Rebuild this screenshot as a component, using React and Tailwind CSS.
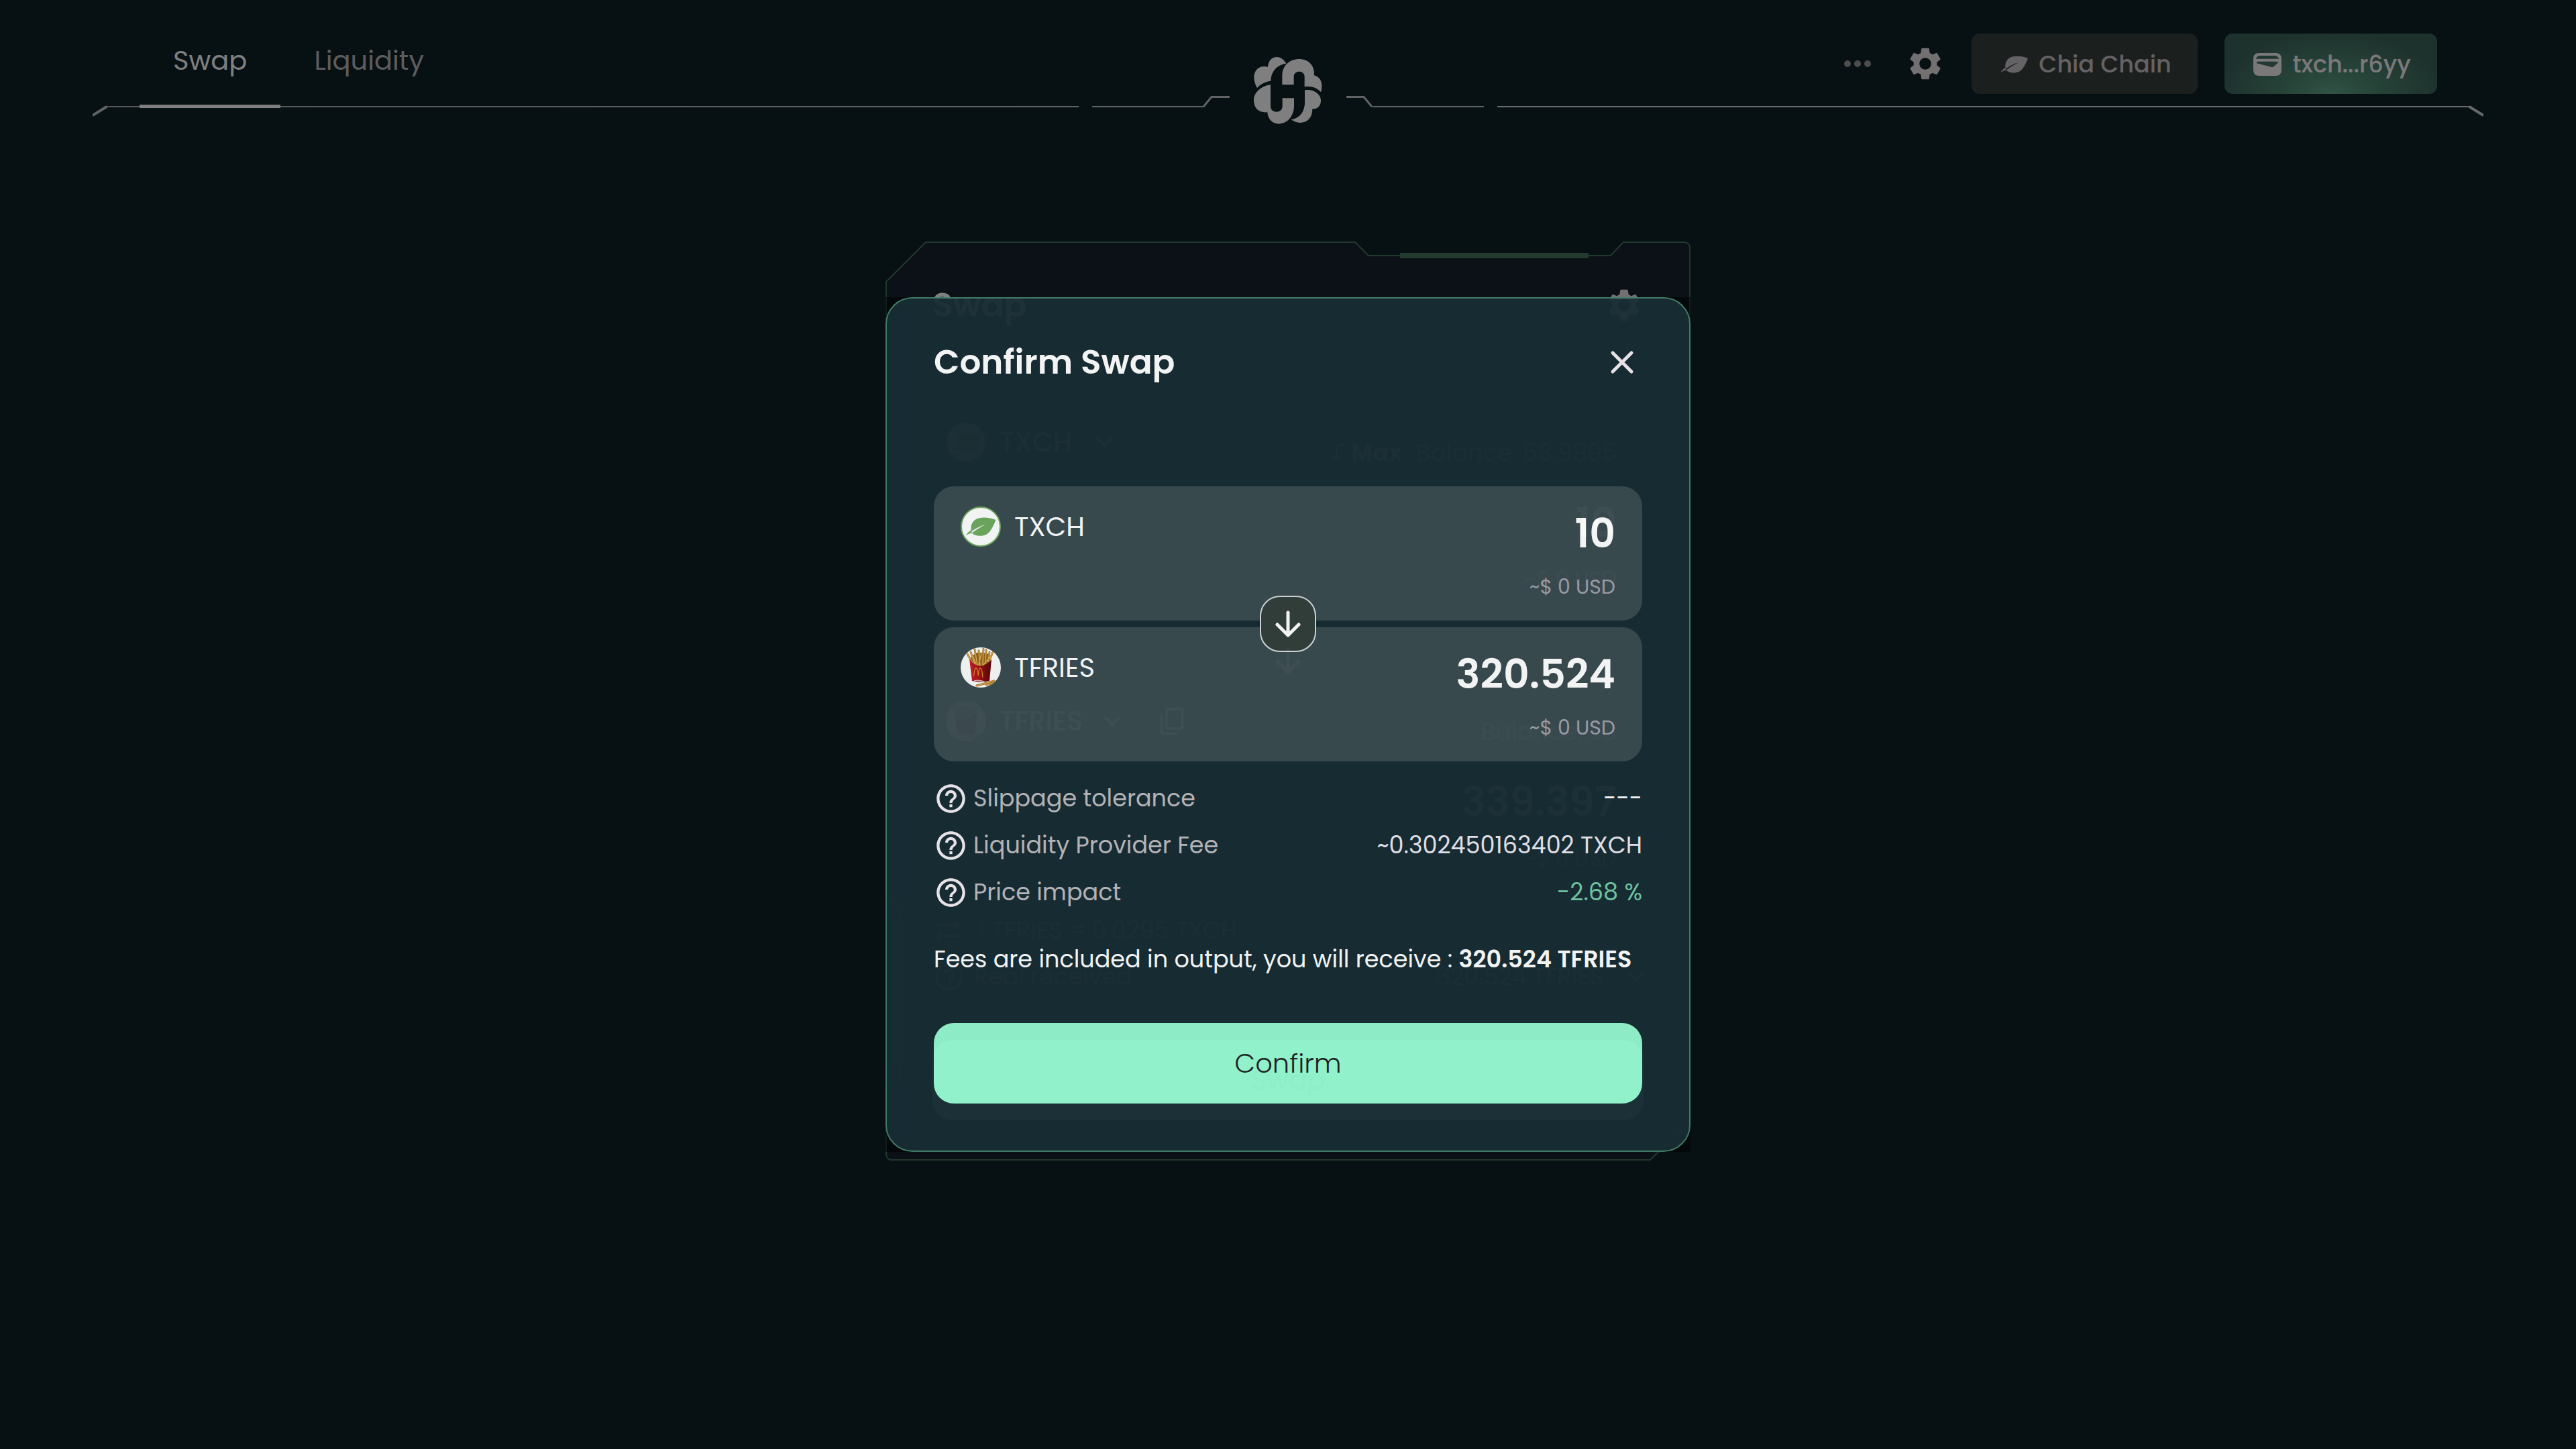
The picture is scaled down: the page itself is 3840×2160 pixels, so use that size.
import React from "react";
import { MdSettings, MdHelpOutline, MdContentCopy } from "react-icons/md";

function Logo() {
  return (
    <svg viewBox="0 0 360 360" className="h-[120px] w-[120px] fill-white" aria-label="Hashgreen">
      <path d="M172 59C160 38 144 30 130 30C108 30 92 46 90 74C58 65 30 82 28 118C28 138 34 156 42 168C56 152 78 140 103 137C104 100 125 66 172 59Z" />
      <path d="M102 154C60 160 28 188 27 222C27 260 50 280 88 277C90 310 112 329 140 329C178 327 206 295 207 250V214H155V250C155 284 102 284 102 250Z" />
      <path d="M154 154V110C156 65 190 39 230 39C272 39 300 68 297 112C320 118 334 138 331 168C330 178 329 182 327 187C312 168 285 158 254 163V118C254 88 206 88 206 118V154Z" />
      <path d="M255 178C290 172 325 192 327 222C328 248 312 264 289 262C290 300 268 324 234 324C218 323 205 318 194 310C232 304 252 276 255 240Z" />
    </svg>
  );
}

function Leaf({ className, vein }) {
  return (
    <svg viewBox="0 0 125 78" className={className} aria-hidden="true">
      <path
        fill="currentColor"
        d="M125 11C100 1 62 -3 42 9C26 19 20 36 23 53C14 59 6 67 0 76C10 70 18 66 27 66C38 79 68 81 88 70C104 60 115 37 125 11Z"
      />
      <path d="M22 61C38 48 58 38 82 30C62 42 46 50 28 64Z" fill={vein} />
    </svg>
  );
}

function Fries({ className }) {
  return (
    <svg viewBox="0 0 60 60" className={className} aria-hidden="true">
      <defs>
        <clipPath id="friesClip">
          <circle cx="30" cy="30" r="30" />
        </clipPath>
        <linearGradient id="friesBox" x1="0" x2="1" y1="0" y2="0">
          <stop offset="0" stopColor="#c81d24" />
          <stop offset="0.45" stopColor="#a81318" />
          <stop offset="0.7" stopColor="#7a0c10" />
          <stop offset="1" stopColor="#5e090c" />
        </linearGradient>
      </defs>
      <g clipPath="url(#friesClip)">
        <rect width="60" height="60" fill="#fbfbfb" />
        <path d="M14 17L18 12L24 8L34 8L42 10L45 18Q36 30 28 28Q20 26 14 17Z" fill="#9a661c" />
        <g stroke="#9c681e" strokeWidth="2.800" strokeLinecap="round">
          <path d="M17 22L10 10M21 24L15 7M25 27L21 3M29 27L27 5M33 27L34 2M37 24L38 4M41 21L43 7M44 17L48 7M27 26L31 9M23 25L18 13M34 26L46 12" />
        </g>
        <g stroke="#dcae54" strokeWidth="1.500" strokeLinecap="round">
          <path d="M17 22L10 10M21 24L15 7M25 27L21 3M29 27L27 5M33 27L34 2M37 24L38 4M41 21L43 7M44 17L48 7M27 26L31 9M23 25L18 13M34 26L46 12" />
        </g>
        <path d="M13 17Q28 38 46 18L43 50Q30 53 17 50Z" fill="url(#friesBox)" />
        <path d="M19.500 43Q20.500 31 23 31Q25.500 31 26.300 42Q27 31 29.500 31Q32 31 33 45" fill="none" stroke="#d18f27" strokeWidth="1.300" />
        <path d="M20 50Q29 48 37 52" stroke="#d8b8b8" strokeWidth="1.500" fill="none" />
        <path d="M24 57L50 50M38 56L50 53" stroke="#9c681e" strokeWidth="3" strokeLinecap="round" />
        <path d="M24 57L50 50M38 56L50 53" stroke="#dcae54" strokeWidth="1.800" strokeLinecap="round" />
      </g>
    </svg>
  );
}

function ChiaCoin({ className }) {
  return (
    <span className={`flex items-center justify-center rounded-full border-2 border-[#6fab60] bg-white ${className}`}>
      <Leaf className="h-7 w-[46px] text-[#6fab60]" vein="#ffffff" />
    </span>
  );
}

function ArrowDown() {
  return (
    <svg viewBox="0 0 40 40" className="h-10 w-10" fill="none" stroke="currentColor" strokeWidth="5" strokeLinecap="round" strokeLinejoin="round" aria-hidden="true">
      <path d="M20 3V36M4 21L20 37L36 21" />
    </svg>
  );
}

function Chevron() {
  return (
    <svg viewBox="0 0 24 14" className="h-3.5 w-6" fill="none" stroke="currentColor" strokeWidth="4" strokeLinecap="round" aria-hidden="true">
      <path d="M2 2L12 12L22 2" />
    </svg>
  );
}

function WalletIcon() {
  return (
    <svg viewBox="0 0 126 102" className="h-[34px] w-[42px]" fill="currentColor" fillRule="evenodd" aria-hidden="true">
      <path d="M26 0H100Q126 0 126 26V76Q126 102 100 102H26Q0 102 0 76V26Q0 0 26 0ZM12 27Q16 25 24 26H102Q110 25 114 28Q112 13 98 12H28Q14 13 12 27ZM13 45L84 64Q88 64 92 60L112 43Q108 38 102 38H24Q16 38 13 45Z" />
    </svg>
  );
}

function HeaderLines() {
  return (
    <div className="col-start-1 row-start-1 mx-[138px] mt-[143px] flex h-8 items-start gap-5 self-start text-[#c2c5c6]" aria-hidden="true">
      <div className="flex flex-1">
        <svg viewBox="0 0 22 32" className="h-8 w-[22px]" fill="none" stroke="currentColor">
          <path d="M22 16H20" strokeWidth="2" />
          <path d="M0 29L21 16" strokeWidth="4" />
        </svg>
        <div className="mt-[15px] h-0.5 flex-1 bg-gradient-to-r from-[#aaadae] to-[#c2c5c6]" />
      </div>
      <svg viewBox="0 0 584 32" className="h-8 w-[584px]" fill="none" stroke="currentColor">
        <path d="M0 16H167M418 16H584" strokeWidth="2" />
        <path d="M166 16L178 1.500H205M417 16L405 1.500H379" strokeWidth="3" />
      </svg>
      <div className="flex flex-1">
        <div className="mt-[15px] h-0.5 flex-1 bg-[#d2d5d5]" />
        <svg viewBox="0 0 22 32" className="h-8 w-[22px] text-[#d2d5d5]" fill="none" stroke="currentColor">
          <path d="M0 16H2" strokeWidth="2" />
          <path d="M22 29L1 16" strokeWidth="4" />
        </svg>
      </div>
    </div>
  );
}

function Header() {
  return (
    <header className="grid h-[195px] w-full">
      <HeaderLines />
      <nav className="col-start-1 row-start-1 ml-[208px] flex items-start self-start justify-self-start text-[40px] leading-[60px]">
        <a href="#swap" className="h-[161px] border-b-[5px] border-white px-[50px] pt-[60px] text-white" aria-current="page">
          Swap
        </a>
        <a href="#liquidity" className="h-[161px] px-[50px] pt-[60px] text-[#bab8bd]">
          Liquidity
        </a>
      </nav>
      <a href="#home" className="col-start-1 row-start-1 mt-[75px] self-start justify-self-center">
        <Logo />
      </a>
      <div className="col-start-1 row-start-1 mr-[207px] mt-[50px] flex h-[90px] items-center gap-10 self-start justify-self-end text-[35px] font-medium">
        <button aria-label="More" className="flex w-16 items-center justify-center gap-[5px]">
          <span className="h-2.5 w-2.5 rounded-full bg-[#9a9a9a]" />
          <span className="h-2.5 w-2.5 rounded-full bg-[#9a9a9a]" />
          <span className="h-2.5 w-2.5 rounded-full bg-[#9a9a9a]" />
        </button>
        <button aria-label="Settings" className="text-[#e6e1e5]">
          <MdSettings className="h-[58px] w-[58px]" />
        </button>
        <button className="flex h-[90px] w-[337px] items-center justify-center gap-4 rounded-xl bg-[#37403e] pl-1 pt-0.5 text-[#cac4cb]">
          <Leaf className="h-[26px] w-[41px]" vein="#37403e" />
          Chia Chain
        </button>
        <button className="flex h-[90px] w-[317px] items-center justify-center gap-4 rounded-xl bg-[radial-gradient(ellipse_at_bottom,#62a688,#4e8872_30%,#3b625a_75%)] pl-1 pt-0.5 text-[#f6f0f4]">
          <WalletIcon />
          txch...r6yy
        </button>
      </div>
    </header>
  );
}

function PanelFrame() {
  return (
    <svg viewBox="0 0 1200 1370" preserveAspectRatio="none" className="absolute inset-0 h-full w-full" aria-hidden="true">
      <path
        d="M1 60L60 1H700L720 21H1081L1100 1H1190Q1199 1 1199 10V1312L1140 1369H10Q1 1369 1 1360V1268L21 1252V992L1 976Z"
        fill="#16222d"
        stroke="#42705a"
        strokeWidth="2"
      />
      <path d="M767 17H1048V25H767Z" fill="#44725a" />
      <path d="M12 1011H27V1226H12Z" fill="#2c463f" />
    </svg>
  );
}

function PanelAmount({ label, value }) {
  return (
    <div className="flex flex-col items-end gap-5 rounded-[30px] bg-white/2 px-10 pb-[22px] pt-[30px]">
      <input aria-label={label} defaultValue={value} className="h-20 w-full bg-transparent text-right text-[60px] font-semibold leading-[80px] text-[#d0d0d4]" />
      <span className="text-[32px] leading-[48px] text-[#85868f]">~$ 0 USD</span>
    </div>
  );
}

function SwapPanel() {
  return (
    <section className="relative w-[1200px] text-[35px] leading-[48px] text-white">
      <PanelFrame />
      <div className="relative flex flex-col px-[70px] pb-[60px] pt-[71px]">
        <div className="flex h-12 items-center justify-between">
          <h1 className="text-[50px] font-semibold">Swap</h1>
          <button aria-label="Swap settings" className="text-[#e6e1e5]">
            <MdSettings className="h-[58px] w-[58px]" />
          </button>
        </div>
        <p className="mt-8 text-[#5d5e68]">Start trading tokens</p>
        <div className="mt-[60px] flex h-20 items-end justify-between">
          <button className="flex h-20 items-center rounded-full bg-white/2 pl-5 pr-8 text-[40px] font-medium text-[#a7a8b2]">
            <ChiaCoin className="h-[60px] w-[60px] opacity-60" />
            <span className="ml-5 mr-9">TXCH</span>
            <Chevron />
          </button>
          <p className="flex gap-5 pr-10">
            <button className="flex items-center gap-2 font-bold text-[#a0a1ab]">
              <svg viewBox="0 0 20 28" className="h-7 w-5" fill="none" stroke="currentColor" strokeWidth="3" aria-hidden="true">
                <path d="M18 2H12Q7 2 7 8V24M1 19L7 25L13 19" />
              </svg>
              Max
            </button>
            <span className="text-[#85868f]">Balance: 68.9995</span>
          </p>
        </div>
        <div className="mt-2.5 flex flex-col">
          <PanelAmount label="You pay" value="10" />
        </div>
        <button aria-label="Reverse" className="mt-9 flex h-20 w-20 items-center justify-center self-center rounded-[28px] bg-white/2 text-[#c0c0c6]">
          <ArrowDown />
        </button>
        <div className="mt-2.5 flex h-20 items-end justify-between">
          <div className="flex items-center gap-6">
            <button className="flex h-20 items-center rounded-full bg-white/2 pl-5 pr-8 text-[40px] font-medium text-[#c0c0c6]">
              <Fries className="h-[60px] w-[60px] opacity-60" />
              <span className="ml-5 mr-8">TFRIES</span>
              <Chevron />
            </button>
            <button aria-label="Copy token id" className="text-[#c0c0c6]">
              <MdContentCopy className="h-11 w-11 -scale-x-100 rotate-180" />
            </button>
          </div>
          <span className="pr-10 text-[#73747d]">Balance: 30</span>
        </div>
        <div className="mt-2.5 flex flex-col">
          <PanelAmount label="You receive" value="339.397" />
        </div>
        <div className="mt-1.5 flex flex-col gap-5 pb-8 pt-8 text-[#9a9ba5]">
          <div className="flex items-center gap-6">
            <svg viewBox="0 0 44 34" className="h-[34px] w-11" fill="none" stroke="currentColor" strokeWidth="4" aria-hidden="true">
              <path d="M2 9H38M32 3L39 9L32 15M42 25H6M12 19L5 25L12 31" />
            </svg>
            1 TFRIES = 0.0295 TXCH
          </div>
          <div className="flex items-center gap-3">
            <MdHelpOutline className="h-[50px] w-[50px]" />
            Real received
            <span className="ml-auto mr-6">320.524 TFRIES</span>
            <Chevron />
          </div>
        </div>
        <button className="mt-[37px] h-[120px] rounded-[30px] bg-[#95f7d0] text-[40px] text-[#4d7d6b]">Swap</button>
      </div>
    </section>
  );
}

function TokenBox({ icon, symbol, amount }) {
  return (
    <div className="flex h-[200px] items-start justify-between rounded-[30px] bg-white/15 px-10 pt-[30px]">
      <div className="flex items-center gap-5 text-[40px] leading-[60px] text-white">
        {icon}
        {symbol}
      </div>
      <div className="flex flex-col items-end">
        <span className="text-[60px] font-semibold leading-[80px] text-white">{amount}</span>
        <span className="text-[30px] leading-[80px] text-[#a0a1ad]">~$ 0 USD</span>
      </div>
    </div>
  );
}

function DetailRow({ label, value, valueClass }) {
  return (
    <div className="flex h-[70px] items-center justify-between">
      <dt className="flex items-center gap-2 text-[#bdbbbf]">
        <MdHelpOutline className="h-[51px] w-[51px] text-[#f4eef3]" />
        {label}
      </dt>
      <dd className={valueClass}>{value}</dd>
    </div>
  );
}

function ConfirmDialog() {
  return (
    <div className="fixed inset-0 flex items-center justify-center bg-black/50">
      <div role="dialog" aria-modal="true" aria-labelledby="confirm-title" className="flex w-[1200px] flex-col rounded-[40px] border-2 border-[#438069] bg-[#192d34] p-[70px] text-[35px] opacity-95">
        <div className="flex h-[50px] items-center justify-between">
          <h2 id="confirm-title" className="text-[50px] font-semibold leading-[50px] text-white">
            Confirm Swap
          </h2>
          <button aria-label="Close" className="mr-3 text-[#f4eef3]">
            <svg viewBox="0 0 36 36" className="h-9 w-9" fill="none" stroke="currentColor" strokeWidth="5" strokeLinecap="round" aria-hidden="true">
              <path d="M4 4L32 32M32 4L4 32" />
            </svg>
          </button>
        </div>
        <div className="relative mt-40 flex flex-col gap-2.5">
          <TokenBox icon={<ChiaCoin className="h-[60px] w-[60px]" />} symbol="TXCH" amount="10" />
          <TokenBox icon={<Fries className="h-[60px] w-[60px]" />} symbol="TFRIES" amount="320.524" />
          <span className="absolute left-1/2 top-1/2 flex h-[84px] w-[84px] -translate-x-1/2 -translate-y-1/2 items-center justify-center rounded-[30px] border-2 border-[#d8d8df] bg-[#33403a] text-white">
            <ArrowDown />
          </span>
        </div>
        <dl className="mt-5">
          <DetailRow label="Slippage tolerance" value="---" valueClass="text-white" />
          <DetailRow label="Liquidity Provider Fee" value="~0.302450163402 TXCH" valueClass="text-[#ebe8f1]" />
          <DetailRow label="Price impact" value="-2.68 %" valueClass="text-[#74cba7]" />
        </dl>
        <p className="mt-[35px] whitespace-nowrap leading-[60px] text-white">
          Fees are included in output, you will receive : <strong className="font-semibold">320.524 TFRIES</strong>
        </p>
        <button className="mt-[65px] h-[120px] rounded-[30px] bg-[#95f7d0] text-[40px] font-light text-[#1c1c1e]">Confirm</button>
      </div>
    </div>
  );
}

export default function App() {
  return (
    <div className="flex min-h-screen flex-col bg-[#0f2025] font-['Poppins','Inter',sans-serif]">
      <Header />
      <main className="flex justify-center pt-[165px]">
        <SwapPanel />
      </main>
      <ConfirmDialog />
    </div>
  );
}
